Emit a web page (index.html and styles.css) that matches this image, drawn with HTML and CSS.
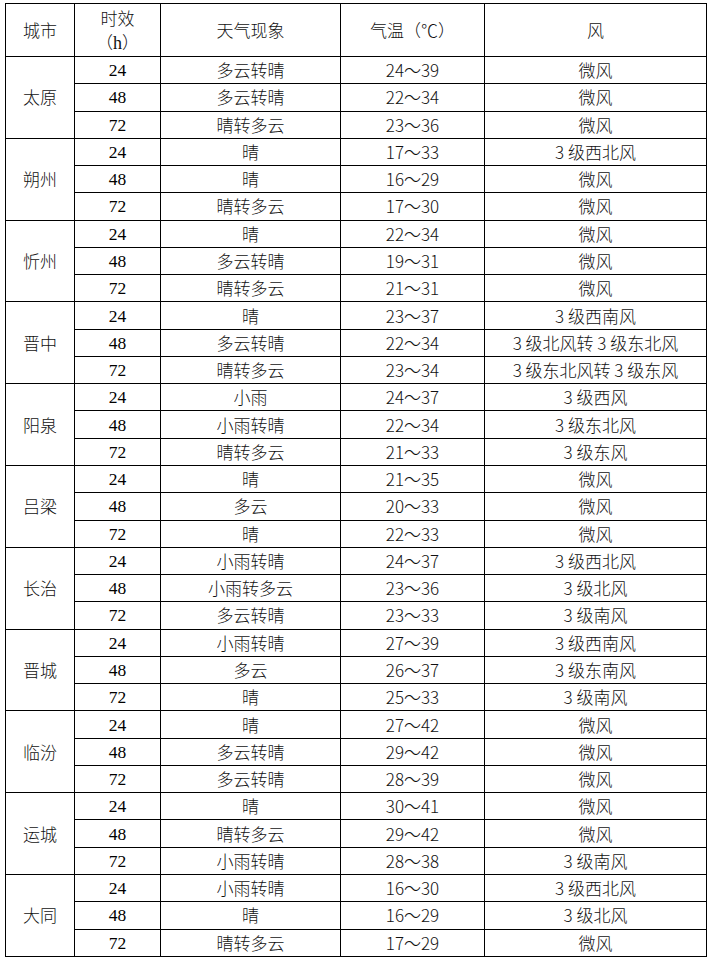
FILE: index.html
```html
<!DOCTYPE html>
<html lang="zh-CN">
<head>
<meta charset="utf-8">
<title>山西城市天气预报</title>
<link rel="stylesheet" href="styles.css">
</head>
<body>
<table class="wx">
<colgroup>
<col class="c-city"><col class="c-hr"><col class="c-wx"><col class="c-temp"><col class="c-wind">
</colgroup>
<thead>
<tr class="head">
<th>城市</th><th class="two">时效<br>（<span class="latin">h</span>）</th><th>天气现象</th><th>气温（℃）</th><th>风</th>
</tr>
</thead>
<tbody>
<tr><td class="city" rowspan="3">太原</td><td class="hr">24</td><td>多云转晴</td><td>24～39</td><td>微风</td></tr>
<tr><td class="hr">48</td><td>多云转晴</td><td>22～34</td><td>微风</td></tr>
<tr><td class="hr">72</td><td>晴转多云</td><td>23～36</td><td>微风</td></tr>

<tr><td class="city" rowspan="3">朔州</td><td class="hr">24</td><td>晴</td><td>17～33</td><td>3 级西北风</td></tr>
<tr><td class="hr">48</td><td>晴</td><td>16～29</td><td>微风</td></tr>
<tr><td class="hr">72</td><td>晴转多云</td><td>17～30</td><td>微风</td></tr>

<tr><td class="city" rowspan="3">忻州</td><td class="hr">24</td><td>晴</td><td>22～34</td><td>微风</td></tr>
<tr><td class="hr">48</td><td>多云转晴</td><td>19～31</td><td>微风</td></tr>
<tr><td class="hr">72</td><td>晴转多云</td><td>21～31</td><td>微风</td></tr>

<tr><td class="city" rowspan="3">晋中</td><td class="hr">24</td><td>晴</td><td>23～37</td><td>3 级西南风</td></tr>
<tr><td class="hr">48</td><td>多云转晴</td><td>22～34</td><td>3 级北风转 3 级东北风</td></tr>
<tr><td class="hr">72</td><td>晴转多云</td><td>23～34</td><td>3 级东北风转 3 级东风</td></tr>

<tr><td class="city" rowspan="3">阳泉</td><td class="hr">24</td><td>小雨</td><td>24～37</td><td>3 级西风</td></tr>
<tr><td class="hr">48</td><td>小雨转晴</td><td>22～34</td><td>3 级东北风</td></tr>
<tr><td class="hr">72</td><td>晴转多云</td><td>21～33</td><td>3 级东风</td></tr>

<tr><td class="city" rowspan="3">吕梁</td><td class="hr">24</td><td>晴</td><td>21～35</td><td>微风</td></tr>
<tr><td class="hr">48</td><td>多云</td><td>20～33</td><td>微风</td></tr>
<tr><td class="hr">72</td><td>晴</td><td>22～33</td><td>微风</td></tr>

<tr><td class="city" rowspan="3">长治</td><td class="hr">24</td><td>小雨转晴</td><td>24～37</td><td>3 级西北风</td></tr>
<tr><td class="hr">48</td><td>小雨转多云</td><td>23～36</td><td>3 级北风</td></tr>
<tr><td class="hr">72</td><td>多云转晴</td><td>23～33</td><td>3 级南风</td></tr>

<tr><td class="city" rowspan="3">晋城</td><td class="hr">24</td><td>小雨转晴</td><td>27～39</td><td>3 级西南风</td></tr>
<tr><td class="hr">48</td><td>多云</td><td>26～37</td><td>3 级东南风</td></tr>
<tr><td class="hr">72</td><td>晴</td><td>25～33</td><td>3 级南风</td></tr>

<tr><td class="city" rowspan="3">临汾</td><td class="hr">24</td><td>晴</td><td>27～42</td><td>微风</td></tr>
<tr><td class="hr">48</td><td>多云转晴</td><td>29～42</td><td>微风</td></tr>
<tr><td class="hr">72</td><td>多云转晴</td><td>28～39</td><td>微风</td></tr>

<tr><td class="city" rowspan="3">运城</td><td class="hr">24</td><td>晴</td><td>30～41</td><td>微风</td></tr>
<tr><td class="hr">48</td><td>晴转多云</td><td>29～42</td><td>微风</td></tr>
<tr><td class="hr">72</td><td>小雨转晴</td><td>28～38</td><td>3 级南风</td></tr>

<tr><td class="city" rowspan="3">大同</td><td class="hr">24</td><td>小雨转晴</td><td>16～30</td><td>3 级西北风</td></tr>
<tr><td class="hr">48</td><td>晴</td><td>16～29</td><td>3 级北风</td></tr>
<tr><td class="hr">72</td><td>晴转多云</td><td>17～29</td><td>微风</td></tr>
</tbody>
</table>
</body>
</html>
```

FILE: styles.css
```css
html, body {
  margin: 0;
  padding: 0;
  background: #fff;
}

body {
  padding: 3px 0 0 5px;
  font-family: "Noto Sans CJK SC", "Noto Sans", sans-serif;
  font-weight: 300;
  color: #111;
}

.wx {
  border-collapse: collapse;
  table-layout: fixed;
  width: 701px;
}

.c-city { width: 69px; }
.c-hr { width: 86px; }
.c-wx { width: 180px; }
.c-temp { width: 144px; }
.c-wind { width: 222px; }

.wx th,
.wx td {
  border: 1px solid #000;
  padding: 0;
  text-align: center;
  vertical-align: middle;
  font-size: 17px;
  line-height: 20px;
  white-space: nowrap;
}

.wx th {
  font-weight: 300;
  height: 52px;
}

.wx th.two {
  line-height: 24px;
}

.latin {
  font-family: "Liberation Serif", serif;
  font-weight: 400;
  font-size: 18px;
  line-height: 1;
}

.wx td {
  height: 26.27px;
}

.wx td.hr {
  font-family: "Liberation Serif", serif;
  font-weight: 400;
  font-size: 17.5px;
  color: #000;
}
```
